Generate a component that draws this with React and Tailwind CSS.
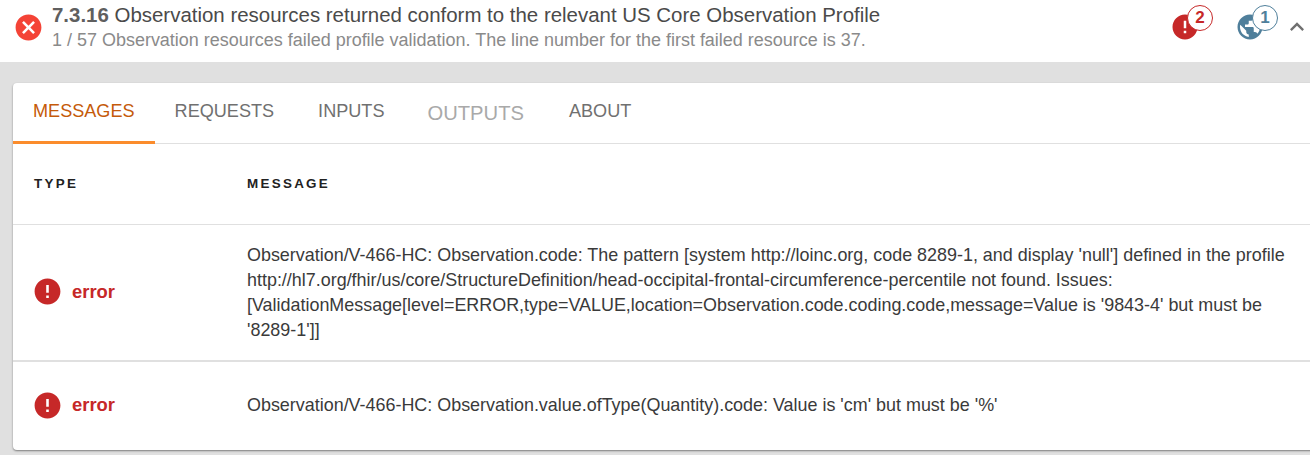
import { MdCancel, MdError, MdPublic, MdExpandLess } from "react-icons/md";

const TABS = [
  { label: "MESSAGES", className: "pr-5 text-[18.1px] text-[#c55a0a] border-[#fb8c2c]" },
  { label: "REQUESTS", className: "pr-[24px] text-[18.1px] text-[#707070] border-transparent" },
  { label: "INPUTS", className: "pr-[23px] text-[18.1px] text-[#707070] border-transparent" },
  { label: "OUTPUTS", className: "pr-[25px] text-[20.2px] text-[#a9a9a9] border-transparent pt-[3px]" },
  { label: "ABOUT", className: "pr-5 text-[18.1px] text-[#707070] border-transparent" },
];

const Badge = ({ count, color }) => (
  <span
    className={`absolute left-[17px] -top-[7px] w-[26px] h-[26px] rounded-full bg-white border flex items-center justify-center text-[17px] font-bold ${color}`}
  >
    {count}
  </span>
);

const MessageRow = ({ children, className, labelClassName }) => (
  <div className={`flex items-center ${className}`}>
    <div className={`w-[234px] shrink-0 pl-[19px] flex items-center gap-[9px] text-[#c62828] text-[18.4px] font-bold ${labelClassName}`}>
      <MdError className="w-[31px] h-[31px]" />
      <span>error</span>
    </div>
    <div className="flex-1 text-[17.93px] leading-[25px] text-[#3a3a3a] whitespace-nowrap">{children}</div>
  </div>
);

export default function App() {
  return (
    <div className="w-[1310px] h-[455px] overflow-hidden bg-[#e0e0e0] font-['Liberation_Sans',Arial,sans-serif]">
      {/* Test header */}
      <div className="h-[62px] bg-white flex items-center pl-[13px]">
        <MdCancel className="w-[31px] h-[31px] text-[#f44336] shrink-0 mt-[-8px]" />
        <div className="ml-[8px] flex-1 mt-[-9px] whitespace-nowrap">
          <div className="text-[20.45px] leading-[26px] text-[#4a4a4a]">
            <span className="font-bold text-[#5f5f5f]">7.3.16</span> Observation resources returned conform to the relevant US Core Observation Profile
          </div>
          <div className="text-[17.98px] leading-[24px] text-[#8a8a8a]">
            1 / 57 Observation resources failed profile validation. The line number for the first failed resource is 37.
          </div>
        </div>
        <div className="relative w-[30px] h-[30px] mr-[35px] mt-[-8px] shrink-0">
          <MdError className="w-[30px] h-[30px] text-[#c62828]" />
          <Badge count="2" color="text-[#c62828] border-[#c62828]" />
        </div>
        <div className="relative w-[30px] h-[30px] mr-[18px] mt-[-8px] shrink-0">
          <MdPublic className="w-[30px] h-[30px] text-[#4f7f9b]" />
          <Badge count="1" color="text-[#4f7f9b] border-[#4f7f9b]" />
        </div>
        <MdExpandLess className="w-[28px] h-[28px] text-[#707070] mt-[-8px] mr-[-1px] shrink-0" />
      </div>

      {/* Detail card */}
      <div className="ml-[13px] mt-[21px] w-[1320px] h-[367px] bg-white rounded-[4px] shadow-[0_1px_2px_rgba(0,0,0,0.45)]">
        <div className="flex h-[61px] border-b border-[#e0e0e0]">
          {TABS.map((tab) => (
            <div key={tab.label} className={`flex items-center h-[61px] pl-5 border-b-[3px] ${tab.className}`}>
              {tab.label}
            </div>
          ))}
        </div>

        <div className="h-[81px] flex items-center border-b border-[#e0e0e0] text-[13.4px] font-bold tracking-[2.3px] text-[#222]">
          <div className="w-[234px] pl-[21px]">TYPE</div>
          <div>MESSAGE</div>
        </div>

        <MessageRow className="h-[137px] border-b-2 border-[#e0e0e0]" labelClassName="mb-[2px]">
          <div>Observation/V-466-HC: Observation.code: The pattern [system http://loinc.org, code 8289-1, and display 'null'] defined in the profile</div>
          <div>http://hl7.org/fhir/us/core/StructureDefinition/head-occipital-frontal-circumference-percentile not found. Issues:</div>
          <div>[ValidationMessage[level=ERROR,type=VALUE,location=Observation.code.coding.code,message=Value is '9843-4' but must be</div>
          <div>'8289-1']]</div>
        </MessageRow>
        <MessageRow className="h-[86px]">
          <div>Observation/V-466-HC: Observation.value.ofType(Quantity).code: Value is 'cm' but must be '%'</div>
        </MessageRow>
      </div>
    </div>
  );
}
